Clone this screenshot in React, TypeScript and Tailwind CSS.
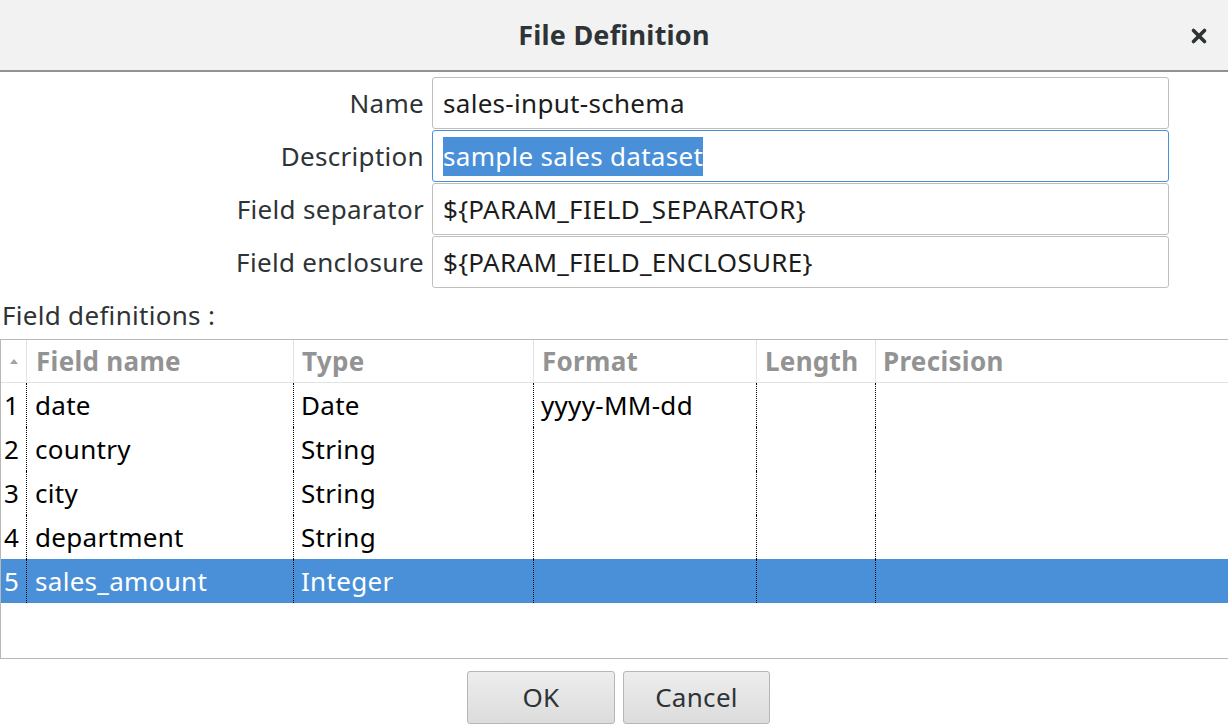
import { X } from "lucide-react";

const FONT = "font-['Noto_Sans','Open_Sans',sans-serif]";

const fields = [
  { label: "Name", value: "sales-input-schema" },
  { label: "Description", value: "sample sales dataset", selected: true },
  { label: "Field separator", value: "${PARAM_FIELD_SEPARATOR}" },
  { label: "Field enclosure", value: "${PARAM_FIELD_ENCLOSURE}" },
];

const rows = [
  { name: "date", type: "Date", format: "yyyy-MM-dd" },
  { name: "country", type: "String", format: "" },
  { name: "city", type: "String", format: "" },
  { name: "department", type: "String", format: "" },
  { name: "sales_amount", type: "Integer", format: "" },
];

export default function App() {
  return (
    <div className={`w-[1228px] h-[728px] bg-white flex flex-col overflow-hidden text-[#2e3436] text-[26px] tracking-[0.3px] ${FONT}`}>
      {/* title bar */}
      <div className="relative h-[72px] shrink-0 bg-[#f2f2f2] border-b-2 border-[#92928f] flex items-center justify-center">
        <span className="text-[27px] font-bold tracking-[0.2px] text-[#2e3436]">File Definition</span>
        <button className="absolute right-[18px] top-[25px] text-[#2e3436]" aria-label="Close">
          <X className="w-[22px] h-[22px]" strokeWidth={4} />
        </button>
      </div>

      {/* form */}
      <div className="grid grid-cols-[424px_737px] gap-x-2 gap-y-px pt-[5px]">
        {fields.map((f) => (
          <div key={f.label} className="contents">
            <div className="h-[52px] flex items-center justify-end text-[#2e3436]">{f.label}</div>
            <div
              className={`h-[52px] rounded-[3px] border flex items-center px-[10px] text-[#1c1c1c] bg-white ${
                f.selected ? "border-[#4a90d9]" : "border-[#bfbfbc]"
              }`}
            >
              {f.selected ? (
                <span className="bg-[#4a90d9] text-white leading-[39px]">{f.value}</span>
              ) : (
                f.value
              )}
            </div>
          </div>
        ))}
      </div>

      <div className="h-[51px] shrink-0 flex items-center pl-[2px] pt-[3px] text-[#2e3436]">Field definitions :</div>

      {/* table */}
      <div className="h-[320px] shrink-0 border-y border-l border-[#b8b8b5] flex flex-col">
        <div className="h-[43px] shrink-0 flex border-b border-[#e3e3e3] font-bold text-[#939393]">
          <div className="w-[25px] flex items-center justify-center">
            <svg width="8" height="5" viewBox="0 0 8 5">
              <path d="M4 0 L8 5 L0 5 Z" fill="#a3a3a3" />
            </svg>
          </div>
          <div className="w-[267px] border-l border-[#e3e3e3] flex items-center pl-[9px]">Field name</div>
          <div className="w-[240px] border-l border-[#e3e3e3] flex items-center pl-[8px]">Type</div>
          <div className="w-[223px] border-l border-[#e3e3e3] flex items-center pl-[8px]">Format</div>
          <div className="w-[119px] border-l border-[#e3e3e3] flex items-center pl-[8px]">Length</div>
          <div className="flex-1 border-l border-[#e3e3e3] flex items-center pl-[7px]">Precision</div>
        </div>
        {rows.map((r, i) => {
          const sel = i === rows.length - 1;
          return (
            <div key={r.name} className={`h-[44px] shrink-0 flex ${sel ? "bg-[#4a90d9] text-white" : "text-black"}`}>
              <div className="w-[25px] flex items-center pl-[3px]">{i + 1}</div>
              <div className="w-[267px] border-l border-dotted border-black flex items-center pl-[8px]">{r.name}</div>
              <div className="w-[240px] border-l border-dotted border-black flex items-center pl-[7px]">{r.type}</div>
              <div className="w-[223px] border-l border-dotted border-black flex items-center pl-[7px]">{r.format}</div>
              <div className="w-[119px] border-l border-dotted border-black" />
              <div className="flex-1 border-l border-dotted border-black" />
            </div>
          );
        })}
      </div>

      {/* buttons */}
      <div className="flex-1 flex items-start justify-center gap-2 pt-[12px] pl-[9px]">
        <button className="w-[148px] h-[53px] rounded-[3px] border border-[#b6b6b3] bg-gradient-to-b from-[#ededed] to-[#dcdcdc] text-[#2e3436]">
          OK
        </button>
        <button className="w-[147px] h-[53px] rounded-[3px] border border-[#b6b6b3] bg-gradient-to-b from-[#ededed] to-[#dcdcdc] text-[#2e3436]">
          Cancel
        </button>
      </div>
    </div>
  );
}
